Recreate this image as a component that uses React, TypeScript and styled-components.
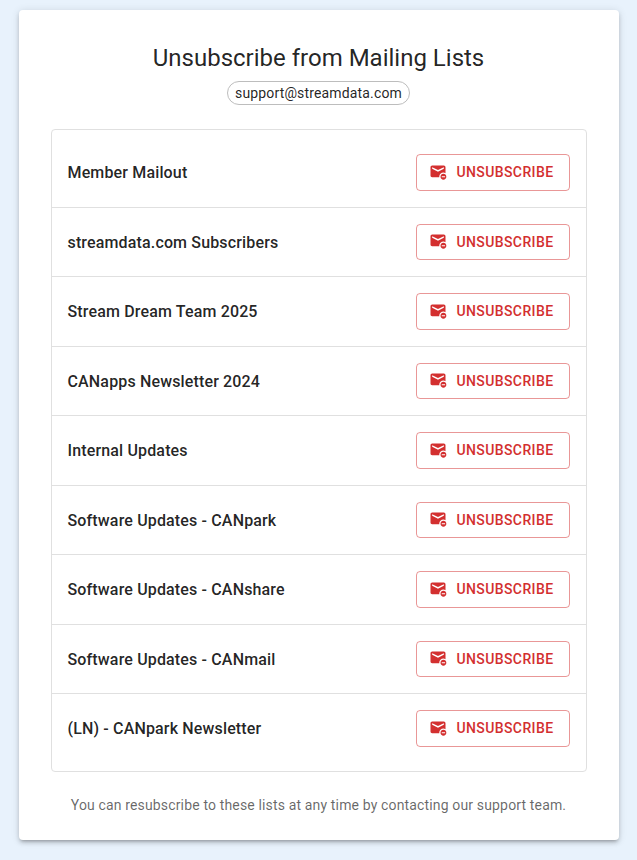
import React from "react";
import styled, { createGlobalStyle } from "styled-components";
import { MdUnsubscribe } from "react-icons/md";

const GlobalStyle = createGlobalStyle`
  html, body { margin: 0; padding: 0; }
  body {
    background: #e8f2fc;
    font-family: Roboto, "Helvetica Neue", Arial, sans-serif;
    color: rgba(0, 0, 0, 0.87);
  }
  * { box-sizing: border-box; }
`;

const Page = styled.main`
  min-height: 100vh;
  display: flex;
  align-items: center;
  justify-content: center;
  padding: 10px 0 20px;
`;

const Card = styled.section`
  width: 600px;
  background: #fff;
  border-radius: 4px;
  padding: 32px 32px 24px;
  display: flex;
  flex-direction: column;
  box-shadow: 0 3px 3px -2px rgba(0,0,0,.2), 0 3px 4px 0 rgba(0,0,0,.14), 0 1px 8px 0 rgba(0,0,0,.12);
`;

const Title = styled.h1`
  margin: 0 0 7px;
  font-size: 24px;
  font-weight: 400;
  line-height: 1.334;
  text-align: center;
`;

const ChipRow = styled.div`
  display: flex;
  justify-content: center;
  margin-bottom: 24px;
`;

const Chip = styled.span`
  height: 24px;
  padding: 0 7px;
  display: inline-flex;
  align-items: center;
  border: 1px solid #bdbdbd;
  border-radius: 12px;
  font-size: 14px;
  letter-spacing: 0.01071em;
`;

const List = styled.ul`
  margin: 0;
  padding: 8px 0;
  list-style: none;
  border: 1px solid #e0e0e0;
  border-radius: 4px;
`;

const Row = styled.li<{ $divider: boolean }>`
  display: flex;
  align-items: center;
  justify-content: space-between;
  padding: 16px;
  border-bottom: ${(p) => (p.$divider ? "1px solid #e0e0e0" : "none")};
`;

const Name = styled.span`
  padding-top: 1px;
  font-size: 16px;
  font-weight: 500;
  line-height: 1.5;
  letter-spacing: 0.00938em;
`;

const UnsubscribeButton = styled.button`
  display: inline-flex;
  align-items: center;
  padding: 5px 15px;
  background: transparent;
  border: 1px solid rgba(211, 47, 47, 0.5);
  border-radius: 4px;
  color: #d32f2f;
  font-family: inherit;
  font-size: 14px;
  font-weight: 500;
  line-height: 1.75;
  letter-spacing: 0.02857em;
  text-transform: uppercase;
  cursor: pointer;

  svg {
    margin: 0 8px 0 -4px;
    font-size: 20px;
  }
`;

const Note = styled.p`
  margin: 23.5px 0 0;
  padding-bottom: 0.5px;
  font-size: 14px;
  line-height: 1.43;
  letter-spacing: 0.01071em;
  color: rgba(0, 0, 0, 0.6);
  text-align: center;
`;

const lists = [
  "Member Mailout",
  "streamdata.com Subscribers",
  "Stream Dream Team 2025",
  "CANapps Newsletter 2024",
  "Internal Updates",
  "Software Updates - CANpark",
  "Software Updates - CANshare",
  "Software Updates - CANmail",
  "(LN) - CANpark Newsletter",
];

export default function App() {
  return (
    <>
      <GlobalStyle />
      <Page>
        <Card>
          <Title>Unsubscribe from Mailing Lists</Title>
          <ChipRow>
            <Chip>support@streamdata.com</Chip>
          </ChipRow>
          <List>
            {lists.map((name, i) => (
              <Row key={name} $divider={i < lists.length - 1}>
                <Name>{name}</Name>
                <UnsubscribeButton type="button">
                  <MdUnsubscribe />
                  Unsubscribe
                </UnsubscribeButton>
              </Row>
            ))}
          </List>
          <Note>You can resubscribe to these lists at any time by contacting our support team.</Note>
        </Card>
      </Page>
    </>
  );
}
